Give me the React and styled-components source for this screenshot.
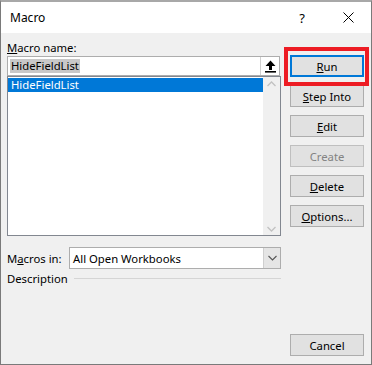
import React from 'react'
import styled, { createGlobalStyle } from 'styled-components'

const Global = createGlobalStyle`
  html, body { margin: 0; padding: 0; background: #ffffff; }
  body { font-family: "Noto Sans", "Open Sans", sans-serif; font-size: 11.3px; color: #000; }
  * { box-sizing: border-box; }
`

const Window = styled.div`
  width: 372px;
  height: 365px;
  display: flex;
  flex-direction: column;
  border: 1px solid #7a7a7a;
  border-top: 2px solid #a8a8a8;
  background: #f0f0f0;
`

const TitleBar = styled.div`
  height: 31px;
  background: #fff;
  display: flex;
  align-items: center;
  padding-left: 9px;
  font-size: 12px;
`

const Title = styled.div`
  flex: 1;
  margin-top: -1px;
`

const TitleBtn = styled.div`
  width: 46px;
  height: 31px;
  display: flex;
  align-items: center;
  justify-content: center;
  font-size: 13px;
`

const Body = styled.div`
  flex: 1;
  display: flex;
  padding: 7px 7px 8px 6px;
  gap: 9px;
`

const LeftCol = styled.div`
  width: 274px;
  display: flex;
  flex-direction: column;
`

const Label = styled.div`
  height: 15px;
  line-height: 15px;
  margin-bottom: 1px;
  u { text-decoration: underline; }
`

const InputBox = styled.div`
  height: 20px;
  width: 273px;
  border: 1px solid #adadad;
  background: #fff;
  display: flex;
  align-items: center;
  padding-left: 2px;
`

const Selected = styled.span`
  background: #c8c8c8;
  line-height: 14px;
  padding: 0 1px;
`

const UpBtn = styled.div`
  margin-left: auto;
  width: 19px;
  height: 18px;
  border-left: 1px solid #d0d0d0;
  background: #fff;
  display: flex;
  align-items: center;
  justify-content: center;
`

const ListBox = styled.div`
  height: 160px;
  border: 1px solid #828790;
  background: #fff;
  display: flex;
`

const Items = styled.div`
  flex: 1;
  padding: 1px 0 0 0;
`

const Item = styled.div`
  height: 14px;
  line-height: 14px;
  padding-left: 3px;
  background: ${p => (p.$active ? '#0078d7' : 'transparent')};
  color: ${p => (p.$active ? '#fff' : '#000')};
`

const ScrollBar = styled.div`
  width: 17px;
  background: #f0f0f0;
  display: flex;
  flex-direction: column;
  justify-content: space-between;
  align-items: center;
  padding: 4px 0 3px;
`

const Row = styled.div`
  display: flex;
  align-items: center;
  margin-top: ${p => p.$mt || 0}px;
`

const Combo = styled.div`
  margin-left: auto;
  width: 212px;
  height: 22px;
  border: 1px solid #adadad;
  background: #fff;
  display: flex;
  align-items: center;
  padding-left: 3px;
`

const ComboBtn = styled.div`
  margin-left: auto;
  width: 17px;
  height: 20px;
  background: #e5e5e5;
  border-left: 1px solid #cfcfcf;
  display: flex;
  align-items: center;
  justify-content: center;
`

const Line = styled.div`
  flex: 1;
  height: 1px;
  background: #d5d5d5;
  margin-left: 6px;
  margin-top: -1px;
`

const RightCol = styled.div`
  width: 74px;
  display: flex;
  flex-direction: column;
  gap: 8px;
  padding-top: 15px;
`

const Button = styled.div`
  height: 22px;
  border: ${p => (p.$default ? '2px solid #0078d7' : '1px solid #adadad')};
  background: #e1e1e1;
  color: ${p => (p.$disabled ? '#838383' : '#000')};
  border-color: ${p => (p.$disabled ? '#bfbfbf' : p.$default ? '#0078d7' : '#adadad')};
  display: flex;
  align-items: center;
  justify-content: center;
  margin-top: ${p => (p.$bottom ? 'auto' : '0')};
  u { text-decoration: underline; }
`

const Marked = styled.div`
  position: relative;
  &::after {
    content: '';
    position: absolute;
    left: -6px;
    right: -5px;
    top: -8px;
    bottom: -9px;
    border: 4px solid #ed1c24;
    pointer-events: none;
  }
`

const Chevron = ({ up }) => (
  <svg width="9" height="6" viewBox="0 0 9 6">
    <path d={up ? 'M0.5 5L4.5 1L8.5 5' : 'M0.5 1L4.5 5L8.5 1'} fill="none" stroke="#c2c2c2" strokeWidth="1.3" />
  </svg>
)

export default function App() {
  return (
    <>
      <Global />
      <Window>
        <TitleBar>
          <Title>Macro</Title>
          <TitleBtn>?</TitleBtn>
          <TitleBtn>
            <svg width="11" height="11" viewBox="0 0 11 11">
              <path d="M0.5 0.5L10.5 10.5M10.5 0.5L0.5 10.5" stroke="#000" strokeWidth="1" />
            </svg>
          </TitleBtn>
        </TitleBar>
        <Body>
          <LeftCol>
            <Label><u>M</u>acro name:</Label>
            <InputBox>
              <Selected>HideFieldList</Selected>
              <UpBtn>
                <svg width="11" height="13" viewBox="0 0 11 13">
                  <path d="M5.5 0.5L10.5 6H7V10H4V6H0.5Z" fill="#000" />
                  <rect x="0" y="11" width="11" height="1.6" fill="#000" />
                </svg>
              </UpBtn>
            </InputBox>
            <ListBox>
              <Items>
                <Item $active>HideFieldList</Item>
              </Items>
              <ScrollBar>
                <Chevron up />
                <Chevron />
              </ScrollBar>
            </ListBox>
            <Row $mt={11}>
              <span>M<u>a</u>cros in:</span>
              <Combo>
                All Open Workbooks
                <ComboBtn>
                  <svg width="9" height="6" viewBox="0 0 9 6">
                    <path d="M0.5 1L4.5 5L8.5 1" fill="none" stroke="#555" strokeWidth="1.1" />
                  </svg>
                </ComboBtn>
              </Combo>
            </Row>
            <Row $mt={2}>
              <span>Description</span>
              <Line />
            </Row>
          </LeftCol>
          <RightCol>
            <Marked>
              <Button $default><u>R</u>un</Button>
            </Marked>
            <Button><u>S</u>tep Into</Button>
            <Button><u>E</u>dit</Button>
            <Button $disabled>Create</Button>
            <Button><u>D</u>elete</Button>
            <Button><u>O</u>ptions...</Button>
            <Button $bottom>Cancel</Button>
          </RightCol>
        </Body>
      </Window>
    </>
  )
}
